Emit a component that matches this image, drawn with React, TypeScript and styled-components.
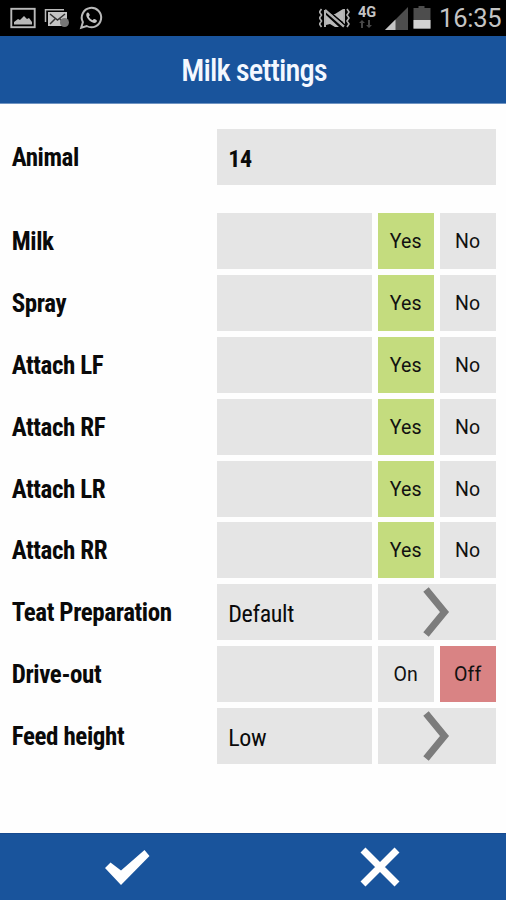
import React from "react";
import styled, { createGlobalStyle } from "styled-components";

const GlobalStyle = createGlobalStyle`
  * { box-sizing: border-box; }
  body { margin: 0; background: #fff; font-family: Roboto, "Liberation Sans", sans-serif; color: #0a0a0a; }
`;

const Screen = styled.div`
  width: 506px;
  height: 900px;
  display: flex;
  flex-direction: column;
  overflow: hidden;
  background: #fefefe;
`;

const StatusBar = styled.header`
  height: 36px;
  flex: none;
  background: #000;
  display: flex;
  justify-content: space-between;
  align-items: stretch;
  color: #c4c4c4;
`;

const StatusGroup = styled.div`
  display: flex;
`;

const Clock = styled.span`
  width: 67px;
  font-size: 25.5px;
  letter-spacing: -0.2px;
  line-height: 37px;
  white-space: nowrap;
`;

const TitleBar = styled.h1`
  height: 67.5px;
  flex: none;
  margin: 0;
  padding: 2px 0 0 2px;
  background: #19549c;
  border-bottom: 1px solid #6f94c2;
  color: #f4f8ff;
  font-size: 30.5px;
  font-weight: 500;
  letter-spacing: -0.9px;
  display: flex;
  align-items: center;
  justify-content: center;
`;

const Condensed = styled.span`
  font-stretch: 75%;
  white-space: nowrap;
`;

const Settings = styled.main`
  flex: 1;
  padding: 25.5px 10px 0 12px;
  display: flex;
  flex-direction: column;
  gap: 5.85px;
`;

const Row = styled.div<{ $spaced?: boolean }>`
  height: 56px;
  flex: none;
  display: grid;
  grid-template-rows: 56px;
  grid-template-columns: 199px 155px 56px 56px;
  column-gap: 6px;
  margin-left: -0.3px;
  margin-bottom: ${(p) => (p.$spaced ? "22.4px" : "0")};
`;

const Label = styled.div`
  padding-top: 1px;
  font-size: 25px;
  font-weight: 700;
  letter-spacing: -0.4px;
  line-height: 56px;
`;

const Value = styled.div<{ $wide?: boolean; $bold?: boolean }>`
  grid-column: ${(p) => (p.$wide ? "2 / 5" : "auto")};
  background: #e5e5e5;
  padding: 2px 0 0 11.5px;
  font-size: 24px;
  font-weight: ${(p) => (p.$bold ? 700 : 450)};
  letter-spacing: -0.35px;
  line-height: 57px;
`;

const tones = { plain: "#e5e5e5", green: "#c4dc7e", red: "#d98384" };

const Choice = styled.button<{ $tone: keyof typeof tones }>`
  border: 0;
  padding: 1px 0 0;
  background: ${(p) => tones[p.$tone]};
  color: #111;
  font: 400 19.5px/55px Roboto, sans-serif;
  letter-spacing: 0.15px;
  text-align: center;
`;

const NextButton = styled.button`
  grid-column: 3 / 5;
  border: 0;
  padding: 0 2px 0 0;
  background: #e5e5e5;
  display: flex;
  align-items: center;
  justify-content: center;
`;

const ActionBar = styled.footer`
  height: 67px;
  flex: none;
  display: grid;
  grid-template-columns: 1fr 1fr;
  background: #19549c;
  border-top: 1px solid #174a8f;
`;

const Action = styled.button`
  border: 0;
  padding: 0;
  background: none;
  display: flex;
  align-items: center;
  justify-content: center;
`;

const NoticeIcons = () => (
  <svg width="110" height="36" fill="none" stroke="#b9b9b9">
    <rect x="11.3" y="8.8" width="23.4" height="18.4" strokeWidth="1.9" />
    <path d="M14 24.5v-2.500l4-3 2 1 4-4 3 3 2-1 3 4v2.500z" fill="#b9b9b9" stroke="none" />
    <path d="M45.500 22V9.800H64" strokeWidth="1.500" />
    <rect x="48" y="12" width="19" height="14" fill="#c4c4c4" stroke="none" />
    <path d="M50 14l7.500 6 7.500-6M50 24l5-5M65 24l-5-5" stroke="#333" strokeWidth="1.500" />
    <circle cx="64.500" cy="22.500" r="4.500" fill="#777" stroke="none" />
    <path d="M81.200 27.800l1.700-5.700A9.700 9.700 0 1 1 86.700 26z" strokeWidth="2" />
    <path d="M87.500 12.500c-3 2 0 6.500 2.500 8.500s6 3 7 0c.3-1-2.500-2.500-3.200-2l-1.200 1.300c-1.800-.7-3-2-3.800-3.700l1-1.300c.3-.6-1.300-3.300-2.300-2.800z" fill="#c4c4c4" stroke="none" />
  </svg>
);

const RadioIcons = () => (
  <svg width="120" height="36">
    <g fill="none" stroke="#b0b0b0" strokeWidth="1.600">
      <path d="M3.500 9l-2 3 2 3-2 3 2 3-2 3 2 3M29 9l2 3-2 3 2 3-2 3 2 3-2 3" transform="translate(-1 0)" />
      <path d="M6 10v17M25 9v15" strokeWidth="2" />
      <path d="M6 10l19 16.500" strokeWidth="2.400" />
    </g>
    <path d="M7 15l13 12h-4l-5-3-4 1zM13 14l3 0 8-5v13z" fill="#b9b9b9" />
    <path d="M8 9l18 16" stroke="#000" strokeWidth="1.200" />
    <text x="39" y="17" fill="#c4c4c4" fontFamily="Roboto" fontWeight="700" fontSize="14.500">4G</text>
    <path d="M44 28v-5h2l-3-3-3 3h2v5zM49 20v5h-2l3 3 3-3h-2v-5z" fill="#484848" />
    <path d="M66 30L89 7v23z" fill="#4d4d4d" />
    <path d="M66 30L76.500 19.500V30z" fill="#c4c4c4" />
    <path d="M94.500 8h5V6h6v2h6v21H94.500z" fill="#4d4d4d" />
    <path d="M94.500 20h17v8.500h-17z" fill="#d2d2d2" />
  </svg>
);

const Chevron = () => (
  <svg width="28" height="52" viewBox="0 0 28 52" fill="none">
    <path d="M4 3.500L22.500 26 4 48.500" stroke="#7c7c7c" strokeWidth="7" />
  </svg>
);

type Item = {
  label: string;
  value?: string;
  options?: [string, string];
  selected?: number;
};

const items: Item[] = [
  ...["Milk", "Spray", "Attach LF", "Attach RF", "Attach LR", "Attach RR"].map(
    (label): Item => ({ label, options: ["Yes", "No"], selected: 0 })
  ),
  { label: "Teat Preparation", value: "Default" },
  { label: "Drive-out", options: ["On", "Off"], selected: 1 },
  { label: "Feed height", value: "Low" },
];

export default function App() {
  return (
    <Screen>
      <GlobalStyle />
      <StatusBar>
        <NoticeIcons />
        <StatusGroup>
          <RadioIcons />
          <Clock>16:35</Clock>
        </StatusGroup>
      </StatusBar>
      <TitleBar>
        <Condensed>Milk settings</Condensed>
      </TitleBar>
      <Settings>
        <Row $spaced>
          <Label><Condensed>Animal</Condensed></Label>
          <Value $wide $bold><Condensed>14</Condensed></Value>
        </Row>
        {items.map((item) => (
          <Row key={item.label}>
            <Label><Condensed>{item.label}</Condensed></Label>
            <Value><Condensed>{item.value}</Condensed></Value>
            {item.options ? (
              item.options.map((option, i) => (
                <Choice
                  key={option}
                  $tone={item.selected !== i ? "plain" : i === 0 ? "green" : "red"}
                >
                  {option}
                </Choice>
              ))
            ) : (
              <NextButton aria-label={item.label}><Chevron /></NextButton>
            )}
          </Row>
        ))}
      </Settings>
      <ActionBar>
        <Action aria-label="Confirm">
          <svg width="50" height="40" viewBox="0 0 50 40">
            <path d="M3 21l5.500-5.500L19 23.500 42.500 3l5 6L19 38z" fill="#fff" />
          </svg>
        </Action>
        <Action aria-label="Cancel">
          <svg width="40" height="40" viewBox="0 0 40 40">
            <path d="M3 3l34 34M37 3L3 37" stroke="#fff" strokeWidth="7" />
          </svg>
        </Action>
      </ActionBar>
    </Screen>
  );
}
